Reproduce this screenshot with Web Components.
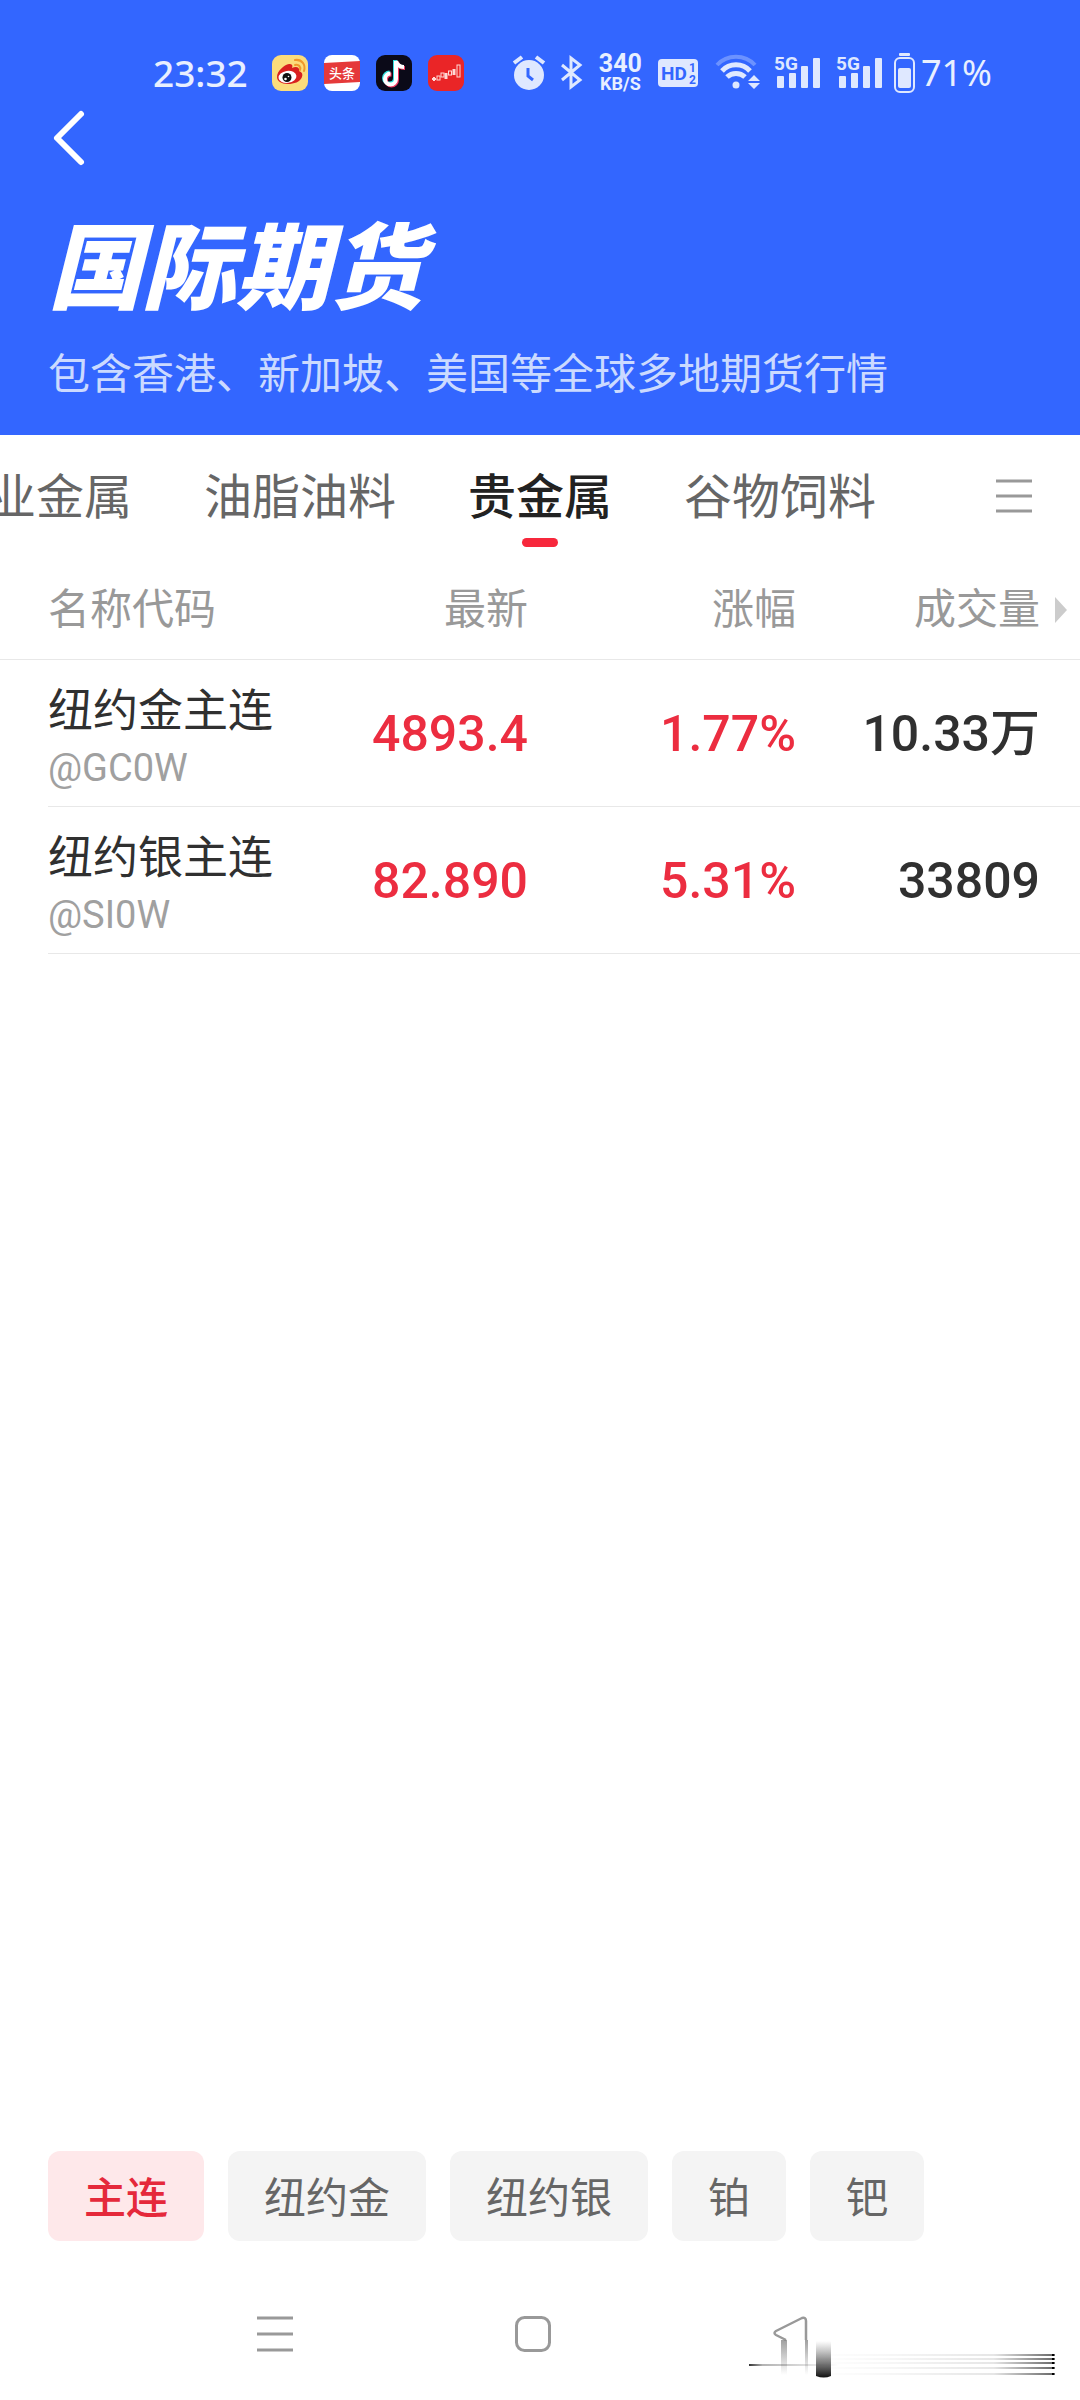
<!DOCTYPE html>
<html lang="zh-CN">
<head>
<meta charset="UTF-8">
<meta name="viewport" content="width=device-width, initial-scale=1">
<title>国际期货</title>
<style>
  body {
    margin: 0;
    background: #fff;
    font-family: Roboto, "Noto Sans CJK SC", sans-serif;
  }
</style>
</head>
<body>
<futures-page>
  <page-header slot="header" heading="国际期货">
    <status-bar slot="status" time="23:32" battery="71%"></status-bar>
    包含香港、新加坡、美国等全球多地期货行情
  </page-header>
  <category-tabs slot="tabs" items="工业金属,油脂油料,贵金属,谷物饲料" active="贵金属"></category-tabs>
  <quote-table></quote-table>
  <filter-chips slot="filters">
    <filter-chip selected>主连</filter-chip>
    <filter-chip>纽约金</filter-chip>
    <filter-chip>纽约银</filter-chip>
    <filter-chip>铂</filter-chip>
    <filter-chip>钯</filter-chip>
  </filter-chips>
  <system-nav slot="nav"></system-nav>
</futures-page>

<script>
class FuturesPage extends HTMLElement {
  connectedCallback() {
    this.attachShadow({ mode: 'open' });
    this.shadowRoot.innerHTML = `
      <style>
        :host {
          display: flex;
          flex-direction: column;
          min-height: 100vh;
        }
        main { flex: 1; }
      </style>
      <slot name="header"></slot>
      <slot name="tabs"></slot>
      <main><slot></slot></main>
      <slot name="filters"></slot>
      <slot name="nav"></slot>
    `;
  }
}

class StatusBar extends HTMLElement {
  connectedCallback() {
    const signal = `
      <svg width="46" height="44" viewBox="0 -4 46 44" fill="#dfe8ff">
        <text x="0" y="15" font-size="19" font-weight="700">5G</text>
        <rect x="3" y="21" width="7" height="12" rx="1"/>
        <rect x="15" y="18" width="7" height="15" rx="1"/>
        <rect x="27" y="11" width="7" height="22" rx="1"/>
        <rect x="39" y="3" width="7" height="30" rx="1"/>
      </svg>`;

    this.attachShadow({ mode: 'open' });
    this.shadowRoot.innerHTML = `
      <style>
        :host {
          display: flex;
          justify-content: space-between;
          align-items: center;
          height: 42px;
          padding: 52px 88px 0 153px;
          color: #e8efff;
        }
        svg { display: block; flex: none; overflow: visible; }
        .group { display: flex; align-items: center; gap: 16px; }
        .time, .power {
          font-family: "Noto Sans", sans-serif;
          font-size: 36px;
          line-height: 42px;
        }
        .time { font-size: 37px; font-weight: 500; margin-right: 8px; }
        .speed {
          font-size: 25px;
          line-height: 21px;
          font-weight: 700;
          text-align: center;
        }
        .speed small { display: block; font-size: 18px; line-height: 19px; }
        .power { display: flex; align-items: center; gap: 6px; margin-left: -4px; }
      </style>
      <div class="group">
        <span class="time">${this.getAttribute('time')}</span>
        <!-- weibo -->
        <svg width="36" height="36" viewBox="0 0 36 36">
          <rect width="36" height="36" rx="9" fill="#fbdc7c"/>
          <path d="M5 22C5 16 12 10 17 9c3 0 4 1 3 4 4-2 8-1 7 3 3 1 4 3 3 6-2 5-8 7-14 7-7 0-11-3-11-7z" fill="#d9201f"/>
          <ellipse cx="15.500" cy="22" rx="9" ry="6" fill="#fff" transform="rotate(-8 15 22)"/>
          <circle cx="15" cy="22.500" r="4.500" fill="#111"/>
          <circle cx="13.500" cy="24" r="1.300" fill="#fff"/>
          <circle cx="16.500" cy="21.500" r=".8" fill="#fff"/>
          <path d="M23 10c4-1 6 2 5 5M23 5c7-1 11 5 9 11" fill="none" stroke="#f0982c" stroke-width="2" stroke-linecap="round"/>
        </svg>
        <!-- toutiao -->
        <svg width="36" height="36" viewBox="0 0 36 36">
          <rect width="36" height="36" rx="8" fill="#fff"/>
          <path d="M0 8l36-2v21L0 29z" fill="#e5393a"/>
          <text x="5" y="23" font-size="13" font-weight="500" fill="#fff">头条</text>
        </svg>
        <!-- douyin -->
        <svg width="36" height="36" viewBox="0 0 36 36" fill="none" stroke-width="4">
          <rect width="36" height="36" rx="9" fill="#0b0a18"/>
          <path d="M19 5v18a5.500 5.500 0 1 1-5.500-5.500M19 6c1 4 4 6 8 6" stroke="#35e0de"/>
          <path d="M21 7v18a5.500 5.500 0 1 1-5.500-5.500M21 7c1 4 4 6 8 6" stroke="#f0385f"/>
          <path d="M20 6v18a5.500 5.500 0 1 1-5.500-5.500M20 6c1 4 4 6 8 6" stroke="#fff"/>
        </svg>
        <!-- stocks -->
        <svg width="36" height="36" viewBox="0 0 36 36">
          <rect width="36" height="36" rx="9" fill="#ea2527"/>
          <g fill="none" stroke="#ffd9d6">
            <path d="M4 24h4M6 22v4" stroke-width="2"/>
            <rect x="9" y="21" width="3" height="4"/>
            <rect x="13" y="18" width="3" height="4"/>
            <path d="M18 18v6" stroke-width="3"/>
            <rect x="20.500" y="16" width="3" height="4"/>
            <path d="M26 14v6" stroke-width="3"/>
            <rect x="29" y="10" width="3" height="12"/>
          </g>
        </svg>
      </div>
      <div class="group">
        <!-- alarm -->
        <svg width="32" height="36" viewBox="0 0 32 36">
          <circle cx="16" cy="20" r="15" fill="#dfe8ff"/>
          <path d="M1 8l8-6M31 8l-8-6" stroke="#dfe8ff" stroke-width="4"/>
          <path d="M15 13v8l5 4" fill="none" stroke="#3366ff" stroke-width="3"/>
        </svg>
        <!-- bluetooth -->
        <svg width="22" height="36" viewBox="0 0 22 36" fill="none" stroke="#dfe8ff" stroke-width="3">
          <path d="M1 10l18 15-9 7V3l9 7L1 25"/>
        </svg>
        <div class="speed">340<small>KB/S</small></div>
        <!-- HD voice, both cards -->
        <svg width="40" height="36" viewBox="0 0 40 36">
          <rect y="4" width="40" height="28" rx="4" fill="#dfe8ff"/>
          <g fill="#3366ff" font-weight="700">
            <text x="3" y="25" font-size="19">HD</text>
            <text x="31" y="17" font-size="12">1</text>
            <text x="31" y="29" font-size="12">2</text>
          </g>
        </svg>
        <!-- wifi -->
        <svg width="44" height="36" viewBox="-2 0 44 36" fill="none" stroke-width="4">
          <path d="M1 10a26 26 0 0 1 38 0" stroke="#6c92ff"/>
          <path d="M6 16a19 19 0 0 1 28 0M11 22a13 13 0 0 1 18 0" stroke="#dfe8ff" stroke-width="5"/>
          <circle cx="20" cy="30" r="3.500" fill="#dfe8ff"/>
          <path d="M38 20l6 6H32zM38 34l6-6H32z" fill="#dfe8ff"/>
        </svg>
        ${signal}
        ${signal}
        <div class="power">
          <svg width="21" height="40" viewBox="0 0 21 40">
            <rect x="5" width="11" height="3" rx="1" fill="#dfe8ff"/>
            <rect x="1" y="5" width="19" height="34" rx="5" fill="none" stroke="#dfe8ff" stroke-width="2"/>
            <rect x="4" y="15" width="13" height="20" rx="2" fill="#dfe8ff"/>
          </svg>
          <span>${this.getAttribute('battery')}</span>
        </div>
      </div>
    `;
  }
}

class PageHeader extends HTMLElement {
  connectedCallback() {
    this.attachShadow({ mode: 'open' });
    this.shadowRoot.innerHTML = `
      <style>
        :host {
          display: block;
          background: #3366ff;
          color: #fff;
          padding-bottom: 28px;
        }
        header { padding: 14px 48px 0; }
        button {
          display: block;
          width: 60px;
          height: 60px;
          padding: 0;
          border: 0;
          background: none;
        }
        svg { display: block; }
        h1 {
          margin: 46px 0 0;
          font-size: 94px;
          line-height: 112px;
          font-weight: 900;
          font-style: italic;
        }
        p {
          margin: 17px 0 0;
          font-size: 42px;
          line-height: 64px;
          color: #cbdaff;
        }
      </style>
      <slot name="status"></slot>
      <header>
        <button type="button" aria-label="返回">
          <svg width="60" height="60" viewBox="0 0 60 60" fill="none" stroke="#fff" stroke-width="6" stroke-linecap="round" stroke-linejoin="round">
            <path d="M33 6L9 30l24 24"/>
          </svg>
        </button>
        <h1>${this.getAttribute('heading')}</h1>
        <p><slot></slot></p>
      </header>
    `;
  }
}

class CategoryTabs extends HTMLElement {
  connectedCallback() {
    const active = this.getAttribute('active');
    const tabs = this.getAttribute('items').split(',').map((name) =>
      `<button type="button" role="tab" aria-selected="${name === active}">${name}</button>`
    ).join('');

    this.attachShadow({ mode: 'open' });
    this.shadowRoot.innerHTML = `
      <style>
        :host {
          display: flex;
          align-items: center;
          padding-right: 48px;
        }
        .strip { flex: 1; min-width: 0; overflow: hidden; }
        /* strip is scrolled so the first tab is cut by the edge */
        .list { display: flex; gap: 72px; margin-left: -60px; }
        button {
          flex: none;
          padding: 0 0 4px;
          border: 0;
          background: none;
          font-family: inherit;
          color: #666;
        }
        .list button {
          position: relative;
          padding: 0;
          font-size: 48px;
          line-height: 126px;
        }
        .list button[aria-selected="true"] { color: #222; font-weight: 500; }
        .list button[aria-selected="true"]::after {
          content: "";
          position: absolute;
          left: 50%;
          bottom: 14px;
          width: 36px;
          height: 9px;
          margin-left: -18px;
          border-radius: 5px;
          background: #f7283c;
        }
        svg { display: block; }
      </style>
      <div class="strip"><div class="list" role="tablist">${tabs}</div></div>
      <button type="button" aria-label="全部分类">
        <svg width="36" height="36" viewBox="0 0 36 36" stroke="#999" stroke-width="3">
          <path d="M0 3h36M0 18h36M0 33h36"/>
        </svg>
      </button>
    `;
  }
}

const QUOTES = [
  { name: '纽约金主连', code: '@GC0W', last: '4893.4', change: '1.77%', volume: '10.33万' },
  { name: '纽约银主连', code: '@SI0W', last: '82.890', change: '5.31%', volume: '33809' },
];

class QuoteTable extends HTMLElement {
  connectedCallback() {
    const rows = QUOTES.map((q) => `
      <tr>
        <td class="name">${q.name}<small>${q.code}</small></td>
        <td class="up">${q.last}</td>
        <td class="up">${q.change}</td>
        <td>${q.volume}</td>
        <td></td>
      </tr>`).join('');

    this.attachShadow({ mode: 'open' });
    this.shadowRoot.innerHTML = `
      <style>
        :host { display: block; }
        table {
          width: 100%;
          table-layout: fixed;
          border-collapse: separate;
          border-spacing: 0;
        }
        th, td { padding: 0; text-align: right; white-space: nowrap; }
        th {
          height: 98px;
          border-bottom: 1px solid #e8e8e8;
          font-size: 42px;
          line-height: 64px;
          font-weight: 400;
          color: #999;
        }
        th:first-child { text-align: left; padding-left: 48px; }
        tbody tr {
          height: 147px;
          background: linear-gradient(#e8e8e8, #e8e8e8) right bottom / calc(100% - 48px) 1px no-repeat;
        }
        td {
          font-size: 50px;
          line-height: 60px;
          font-weight: 500;
          color: #303030;
        }
        td.up { color: #ec2d40; }
        td.name {
          padding: 24px 0 0 48px;
          vertical-align: top;
          text-align: left;
          font-size: 45px;
          line-height: 56px;
          font-weight: 400;
        }
        small {
          display: block;
          font-size: 38px;
          color: #a0a0a0;
        }
        svg { display: block; margin-left: 15px; }
      </style>
      <table>
        <colgroup>
          <col><col style="width: 21%"><col style="width: 268px"><col style="width: 244px"><col style="width: 40px">
        </colgroup>
        <thead>
          <tr>
            <th>名称代码</th><th>最新</th><th>涨幅</th><th>成交量</th>
            <th aria-label="更多">
              <svg width="12" height="26" viewBox="0 0 12 26"><path d="M0 0l12 13L0 26z" fill="#ccc"/></svg>
            </th>
          </tr>
        </thead>
        <tbody>${rows}</tbody>
      </table>
    `;
  }
}

class FilterChips extends HTMLElement {
  connectedCallback() {
    this.attachShadow({ mode: 'open' });
    this.shadowRoot.innerHTML = `
      <style>
        :host { display: flex; gap: 24px; padding: 0 48px; }
      </style>
      <slot></slot>
    `;
  }
}

class FilterChip extends HTMLElement {
  connectedCallback() {
    this.attachShadow({ mode: 'open' });
    this.shadowRoot.innerHTML = `
      <style>
        :host { display: block; }
        button {
          display: block;
          height: 90px;
          padding: 6px 36px 0;
          border: 0;
          border-radius: 12px;
          background: #f4f4f4;
          font-family: inherit;
          font-size: 42px;
          line-height: 84px;
          color: #666;
        }
        :host([selected]) button { background: #fee8ea; color: #e5293b; font-weight: 500; }
      </style>
      <button type="button" aria-pressed="${this.hasAttribute('selected')}"><slot></slot></button>
    `;
  }
}

class SystemNav extends HTMLElement {
  connectedCallback() {
    const streaks = [14, 18, 22, 27, 33].map((y) =>
      `<rect x="64" y="${y}" width="244" height="2" fill="url(#streak)"/><rect x="305" y="${y}" width="2" height="2"/>`
    ).join('');

    this.attachShadow({ mode: 'open' });
    this.shadowRoot.innerHTML = `
      <style>
        :host {
          display: grid;
          grid-template-columns: repeat(3, 1fr);
          justify-items: center;
          padding: 75px 160px 48px 146px;
        }
        button {
          position: relative;
          width: 36px;
          height: 36px;
          padding: 0;
          border: 0;
          background: none;
        }
        svg { display: block; }
        /* smudge lying over the back key */
        .smudge { position: absolute; left: -26px; top: 24px; }
      </style>
      <button type="button" aria-label="最近任务">
        <svg width="36" height="36" viewBox="0 0 36 36" stroke="#999" stroke-width="3">
          <path d="M0 2h36M0 18h36M0 34h36"/>
        </svg>
      </button>
      <button type="button" aria-label="主屏幕">
        <svg width="36" height="36" viewBox="0 0 36 36" fill="none" stroke="#999" stroke-width="3">
          <rect x="1.500" y="1.500" width="33" height="33" rx="8"/>
        </svg>
      </button>
      <button type="button" aria-label="返回">
        <svg width="36" height="36" viewBox="0 0 36 36" fill="none" stroke="#999" stroke-width="2.500" stroke-linejoin="round">
          <path d="M13 24L3 19q-3-2 0-4L29 2q4-1 4 3v19"/>
        </svg>
        <svg class="smudge" width="308" height="40" viewBox="0 0 308 40">
          <defs>
            <linearGradient id="streak">
              <stop offset="0" stop-color="#000" stop-opacity="0"/>
              <stop offset=".3" stop-color="#000" stop-opacity=".03"/>
              <stop offset=".75" stop-color="#000" stop-opacity=".1"/>
              <stop offset="1" stop-color="#000" stop-opacity=".6"/>
            </linearGradient>
            <linearGradient id="tail">
              <stop offset="0" stop-color="#000" stop-opacity=".8"/>
              <stop offset=".15" stop-color="#000" stop-opacity=".3"/>
              <stop offset="1" stop-color="#000" stop-opacity="0"/>
            </linearGradient>
            <linearGradient id="drip" x2="0" y2="1">
              <stop offset="0" stop-color="#777" stop-opacity=".7"/>
              <stop offset="1" stop-color="#777" stop-opacity="0"/>
            </linearGradient>
            <linearGradient id="blot" x2="0" y2="1">
              <stop offset="0" stop-color="#888" stop-opacity="0"/>
              <stop offset=".5" stop-color="#777" stop-opacity=".8"/>
              <stop offset="1" stop-color="#111"/>
            </linearGradient>
          </defs>
          <rect x="34" y="0" width="6" height="35" fill="url(#drip)"/>
          <rect x="58" y="0" width="3" height="35" fill="url(#drip)"/>
          <rect x="2" y="24" width="90" height="2" fill="url(#tail)"/>
          ${streaks}
          <path d="M69 1h15v35q-7 3-15 0z" fill="url(#blot)"/>
        </svg>
      </button>
    `;
  }
}

customElements.define('futures-page', FuturesPage);
customElements.define('status-bar', StatusBar);
customElements.define('page-header', PageHeader);
customElements.define('category-tabs', CategoryTabs);
customElements.define('quote-table', QuoteTable);
customElements.define('filter-chips', FilterChips);
customElements.define('filter-chip', FilterChip);
customElements.define('system-nav', SystemNav);
</script>
</body>
</html>
